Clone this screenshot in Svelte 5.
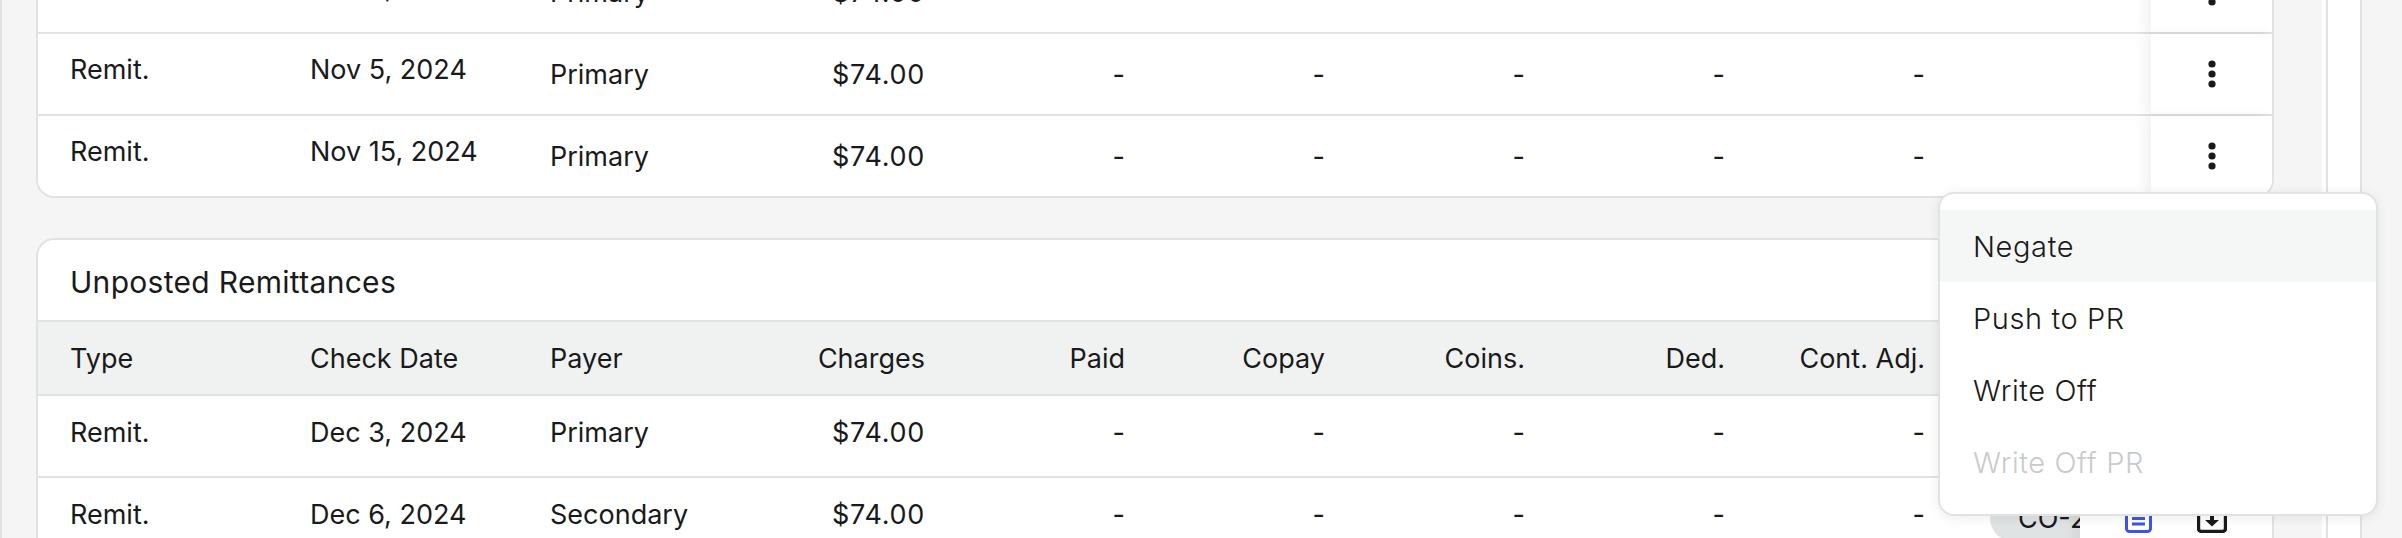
<script lang="ts">
const posted = [
    { date: 'Nov 5, 2024', payer: 'Primary' },
    { date: 'Nov 5, 2024', payer: 'Primary' },
    { date: 'Nov 15, 2024', payer: 'Primary' },
]
const unposted = [
    { date: 'Dec 3, 2024', payer: 'Primary', code: '' },
    { date: 'Dec 6, 2024', payer: 'Secondary', code: 'CO-2' },
]
const heads = ['Paid', 'Copay', 'Coins.', 'Ded.', 'Cont. Adj.']
const menu = [
    { name: 'Negate', hover: true },
    { name: 'Push to PR' },
    { name: 'Write Off' },
    { name: 'Write Off PR', disabled: true },
]
</script>

<div class="page">
    <div class="main">
        <section class="card">
            {#each posted as row}
                <div class="row posted">
                    <div class="cell lift">Remit.</div>
                    <div class="cell lift">{row.date}</div>
                    <div class="cell">{row.payer}</div>
                    <div class="cell num money">$74.00</div>
                    {#each heads as _}
                        <div class="cell num">-</div>
                    {/each}
                    <div class="spare"></div>
                    <div class="actions">
                        <svg width="8" height="28" viewBox="0 0 8 28"><circle cx="4" cy="4" r="3.6"/><circle cx="4" cy="14" r="3.6"/><circle cx="4" cy="24" r="3.6"/></svg>
                    </div>
                </div>
            {/each}
        </section>

        <section class="card">
            <h2>Unposted Remittances</h2>
            <div class="row head unposted">
                <div class="cell">Type</div>
                <div class="cell">Check Date</div>
                <div class="cell">Payer</div>
                <div class="cell num">Charges</div>
                {#each heads as h}
                    <div class="cell num">{h}</div>
                {/each}
                <div class="spare"></div>
                <div class="actions"></div>
            </div>
            {#each unposted as row}
                <div class="row unposted body">
                    <div class="cell">Remit.</div>
                    <div class="cell">{row.date}</div>
                    <div class="cell">{row.payer}</div>
                    <div class="cell num money">$74.00</div>
                    {#each heads as _}
                        <div class="cell num">-</div>
                    {/each}
                    <div class="spare">
                        {#if row.code}<span class="chip">{row.code}</span>{/if}
                    </div>
                    <div class="actions wide">
                        {#if row.code}
                            <svg class="doc" width="27" height="30" viewBox="0 0 27 30" fill="none"><rect x="1.5" y="1.5" width="24" height="27" rx="3" stroke="#3d55e8" stroke-width="3"/><path d="M7 15.5h13M7 21h13" stroke="#3d55e8" stroke-width="3"/></svg>
                            <svg class="box" width="30" height="30" viewBox="0 0 30 30" fill="none"><rect x="1.500" y="1.500" width="27" height="27" rx="3" stroke="#1a1a1a" stroke-width="3.4"/><path d="M13 9h4v8h5l-7 6.500-7-6.500h5z" fill="#1a1a1a"/></svg>
                        {/if}
                    </div>
                </div>
            {/each}
        </section>

        <div class="menu">
            {#each menu as item}
                <div class="item" class:hover={item.hover} class:disabled={item.disabled}>{item.name}</div>
            {/each}
        </div>
    </div>
    <aside class="rail"><div class="rail-inner"></div></aside>
</div>

<style>
:global(body) {
    margin: 0;
}
.page {
    width: 2402px;
    height: 538px;
    overflow: hidden;
    box-sizing: border-box;
    display: flex;
    align-items: stretch;
    background: #f5f5f5;
    border-left: 2px solid #dfe4e3;
    color: #1a1a1a;
    font-family: Inter, "Liberation Sans", sans-serif;
    font-size: 27px;
}
.main {
    position: relative;
    width: 2273px;
    padding-left: 34px;
    box-sizing: border-box;
    margin-top: -50px;
    display: flex;
    flex-direction: column;
    gap: 40px;
}
.card {
    width: 2238px;
    box-sizing: border-box;
    flex: none;
    background: #fff;
    border: 2px solid #dfe4e3;
    border-radius: 18px;
    overflow: hidden;
}
h2 {
    margin: 0;
    height: 80px;
    line-height: 84px;
    padding-left: 32px;
    font-size: 30px;
    font-weight: 400;
    letter-spacing: .3px;
    border-bottom: 2px solid #dfe4e3;
}
.row {
    display: grid;
    height: 82px;
    box-sizing: border-box;
    border-bottom: 2px solid #dfe4e3;
    align-items: center;
}
.row:last-child {
    border-bottom: none;
    height: 80px;
}
.posted {
    grid-template-columns: 240px 240px 240px 199px repeat(5, 200px) 194px 121px;
}
.unposted {
    grid-template-columns: 240px 240px 240px 199px repeat(5, 200px) 123px 192px;
}
.head {
    height: 74px;
    background: #f0f2f1;
}
.cell {
    padding: 0 32px;
    white-space: nowrap;
}
.num {
    text-align: right;
}
.money {
    letter-spacing: .7px;
}
.lift {
    padding-bottom: 10px;
}
.body .cell {
    padding-bottom: 7px;
}
.spare {
    height: 100%;
    overflow: hidden;
    display: flex;
    align-items: center;
}
.chip {
    margin-left: 33px;
    padding: 6px 28px;
    background: #dfe3e3;
    border-radius: 30px;
    white-space: nowrap;
}
.actions {
    height: 100%;
    background: #fff;
    display: flex;
    align-items: center;
    justify-content: center;
    box-shadow: -6px 0 12px rgba(0, 0, 0, .06);
}
.head .actions {
    background: #f0f2f1;
}
.actions circle {
    fill: #1a1a1a;
}
.wide {
    justify-content: flex-start;
}
.doc {
    margin-left: 45px;
}
.box {
    margin-left: 45px;
}
.menu {
    position: absolute;
    left: 1936px;
    top: 242px;
    width: 440px;
    box-sizing: border-box;
    padding: 16px 0;
    background: #fff;
    border: 2px solid #dfe4e3;
    border-radius: 16px;
    box-shadow: 0 2px 12px rgba(0, 0, 0, .08);
    font-size: 29px;
    font-weight: 300;
    letter-spacing: .6px;
}
.item {
    height: 72px;
    line-height: 74px;
    padding-left: 33px;
}
.hover {
    background: #f5f6f6;
}
.disabled {
    color: #c9cbcb;
}
.rail {
    margin-left: 47px;
    width: 40px;
    box-sizing: border-box;
    padding-left: 4px;
    background: #fff;
    border-right: 2px solid #dfe4e3;
}
.rail-inner {
    height: 100%;
    border-left: 2px solid #dfe4e3;
}
</style>
